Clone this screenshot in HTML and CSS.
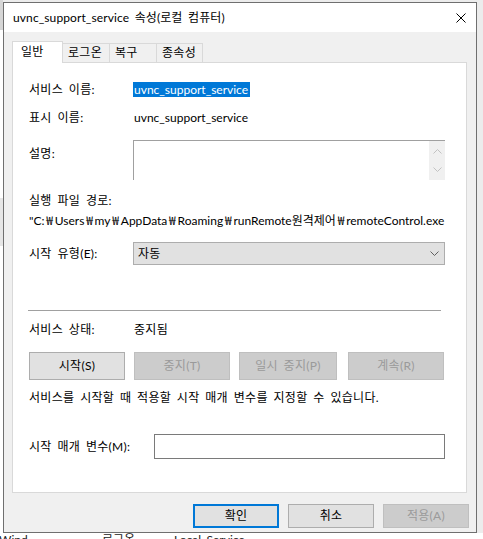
FILE: index.html
```html
<!DOCTYPE html>
<html lang="ko">
<head>
    <meta charset="UTF-8">
    <title>uvnc_support_service 속성(로컬 컴퓨터)</title>
    <link rel="stylesheet" href="styles.css">
</head>
<body>

<div class="desk">
    <!-- services list that sits behind the dialog -->
    <div class="backlist">
        <div class="back-top"></div>
        <div class="back-col">
            <span class="gap"></span>
        </div>
        <div class="back-row">
            <span class="c1">Wind...</span>
            <span class="c2">로그온...</span>
            <span class="c3">Local Service</span>
        </div>
    </div>

    <div class="window">
        <div class="titlebar">
            <span class="title">uvnc_support_service 속성(로컬 컴퓨터)</span>
            <svg class="close" width="10" height="10" viewBox="0 0 10 10">
                <path d="M0.5 0.5 L9.5 9.5 M9.5 0.5 L0.5 9.5" stroke="#000" stroke-width="1" fill="none"/>
            </svg>
        </div>

        <div class="content">
            <div class="tabs">
                <div class="tab active">일반</div>
                <div class="tab">로그온</div>
                <div class="tab">복구</div>
                <div class="tab last">종속성</div>
            </div>

            <div class="panel">
                <div class="row r-name">
                    <span class="label">서비스 이름:</span>
                    <span class="selected">uvnc_support_service</span>
                </div>
                <div class="row r-display">
                    <span class="label">표시 이름:</span>
                    <span class="value">uvnc_support_service</span>
                </div>
                <div class="row r-desc">
                    <span class="label">설명:</span>
                    <div class="memo">
                        <div class="scroll">
                            <svg width="9" height="5" viewBox="0 0 9 5"><path d="M0.5 4.5 L4.5 0.5 L8.5 4.5" stroke="#c2c2c2" fill="none"/></svg>
                            <svg width="9" height="5" viewBox="0 0 9 5"><path d="M0.5 0.5 L4.5 4.5 L8.5 0.5" stroke="#c2c2c2" fill="none"/></svg>
                        </div>
                    </div>
                </div>
                <div class="line ko r-pathlabel">실행 파일 경로:</div>
                <div class="line r-path">"C:<span class="won">₩</span>Users<span class="won">₩</span>my<span class="won">₩</span>AppData<span class="won">₩</span>Roaming<span class="won">₩</span>runRemote원격제어<span class="won">₩</span>remoteControl.exe</div>
                <div class="row r-type">
                    <span class="label">시작 유형(E):</span>
                    <div class="combo">
                        <span class="ko">자동</span>
                        <svg width="9" height="5" viewBox="0 0 9 5"><path d="M0.5 0.5 L4.5 4.5 L8.5 0.5" stroke="#606060" fill="none"/></svg>
                    </div>
                </div>

                <div class="separator"></div>

                <div class="row r-status">
                    <span class="label">서비스 상태:</span>
                    <span class="value ko">중지됨</span>
                </div>
                <div class="svc-buttons">
                    <button class="btn">시작(S)</button>
                    <button class="btn" disabled>중지(T)</button>
                    <button class="btn wide" disabled>일시 중지(P)</button>
                    <button class="btn" disabled>계속(R)</button>
                </div>
                <div class="line ko r-hint">서비스를 시작할 때 적용할 시작 매개 변수를 지정할 수 있습니다.</div>
                <div class="row r-param">
                    <span class="label long">시작 매개 변수(M):</span>
                    <div class="field"></div>
                </div>
            </div>

            <div class="actions">
                <button class="btn default">확인</button>
                <button class="btn">취소</button>
                <button class="btn" disabled>적용(A)</button>
            </div>
        </div>
    </div>
</div>

</body>
</html>
```

FILE: styles.css
```css
body {
    margin: 0;
    width: 483px;
    height: 539px;
    overflow: hidden;
    font-family: Lato, "Noto Sans CJK KR", sans-serif;
    font-size: 12px;
    word-spacing: 2.4px;
    color: #000;
    background: #ececec;
}
.desk {
    display: grid;
    height: 539px;
}
.backlist, .window {
    grid-area: 1 / 1;
}

/* background list */
.backlist {
    display: flex;
    flex-direction: column;
    width: 483px;
    overflow: hidden;
}
.back-top {
    height: 30px;
    width: 3px;
    background: #d6d6d6;
}
.back-col {
    display: flex;
    flex-direction: column;
    width: 3px;
    height: 503px;
    background: #fff;
}
.back-col .gap {
    height: 48px;
    margin-top: 168px;
    background: #e6e6e6;
}
.back-row {
    display: flex;
    height: 6px;
    background: #fff;
    line-height: 14px;
    overflow: hidden;
    color: #222;
}
.back-row .c1 { width: 103px; margin-left: -1px; }
.back-row .c2 { width: 72px; }

/* dialog window */
.window {
    margin: 2px 0 0 3px;
    width: 474px;
    height: 531px;
    box-sizing: border-box;
    border: 1px solid #6f6f6f;
    background: #f0f0f0;
    display: flex;
    flex-direction: column;
}
.titlebar {
    height: 29px;
    background: #fff;
    display: flex;
    align-items: center;
    padding-left: 9px;
}
.title {
    letter-spacing: 0.1px;
    line-height: 16px;
    margin-top: 1px;
}
.close {
    margin-left: auto;
    margin-right: 10px;
}
.content {
    flex: 1;
    display: flex;
    flex-direction: column;
    padding: 9px 9px 0 8px;
}

.ko, .label, .tab, .btn {
    letter-spacing: 0.3px;
}

/* tabs */
.tabs {
    display: flex;
    align-items: flex-end;
    height: 21px;
}
.tab {
    box-sizing: border-box;
    width: 47px;
    height: 19px;
    padding-left: 5px;
    line-height: 17px;
    border: 1px solid #d9d9d9;
    border-bottom: none;
    border-left: none;
    background: #f0f0f0;
}
.tab.last {
    width: 46px;
}
.tab.active {
    position: relative;
    width: 51px;
    height: 22px;
    margin-bottom: -1px;
    padding-left: 8px;
    line-height: 20px;
    border-left: 1px solid #d9d9d9;
    background: #fff;
}

/* tab page */
.panel {
    height: 431px;
    box-sizing: border-box;
    border: 1px solid #d9d9d9;
    background: #fff;
    padding-left: 16px;
    display: flex;
    flex-direction: column;
}
.row {
    display: flex;
    align-items: center;
}
.label {
    width: 104px;
    flex-shrink: 0;
    line-height: 16px;
}
.label.long {
    width: 125px;
}
.value {
    line-height: 16px;
    padding-left: 1px;
}
.line {
    line-height: 16px;
    white-space: nowrap;
}
.won {
    font-family: "Noto Sans CJK KR", sans-serif;
    margin: 0 1.8px;
}
.selected {
    height: 15px;
    line-height: 15px;
    padding: 0 2px 0 1px;
    background: #0078d7;
    color: #fff;
}
.r-name { margin-top: 19px; height: 15px; }
.r-display { margin-top: 13px; height: 15px; }
.r-desc {
    margin-top: 15px;
    align-items: flex-start;
}
.r-desc .label {
    padding-top: 6px;
}
.memo {
    box-sizing: border-box;
    width: 312px;
    height: 40px;
    border-top: 1px solid #a0a0a0;
    border-left: 1px solid #a0a0a0;
    display: flex;
    justify-content: flex-end;
}
.scroll {
    width: 16px;
    background: #f0f0f0;
    display: flex;
    flex-direction: column;
    align-items: center;
    justify-content: space-between;
    padding: 8px 0 8px;
}
.r-pathlabel { margin-top: 13px; }
.r-path { margin-top: 3px; }
.r-type { margin-top: 13px; }
.combo {
    box-sizing: border-box;
    width: 312px;
    height: 23px;
    border: 1px solid #adadad;
    background: #e1e1e1;
    display: flex;
    align-items: center;
    justify-content: space-between;
    padding: 0 5px 0 4px;
    line-height: 16px;
}
.separator {
    margin: 45px 0 0 -1px;
    width: 413px;
    height: 1px;
    background: #a0a0a0;
}
.r-status { margin-top: 11px; }
.svc-buttons {
    display: flex;
    gap: 9px;
    margin-top: 14px;
}
.svc-buttons .btn {
    width: 96px;
    height: 28px;
}
.svc-buttons .btn.wide {
    width: 98px;
    margin-right: 2px;
}
.r-hint { margin-top: 10px; }
.r-param { margin-top: 28px; }
.field {
    box-sizing: border-box;
    width: 291px;
    height: 25px;
    border: 1px solid #7a7a7a;
    background: #fff;
}

/* buttons */
.btn {
    box-sizing: border-box;
    font-family: inherit;
    font-size: 12px;
    word-spacing: inherit;
    color: #000;
    background: #e1e1e1;
    border: 1px solid #adadad;
    padding: 0;
    line-height: 16px;
}
.btn:disabled {
    background: #cccccc;
    border-color: #bfbfbf;
    color: #9a9a9a;
}
.btn.default {
    border: 2px solid #0078d7;
}
.actions {
    display: flex;
    justify-content: flex-end;
    gap: 9px;
    margin: 11px -2px 0 0;
}
.actions .btn {
    width: 86px;
    height: 24px;
}
```
